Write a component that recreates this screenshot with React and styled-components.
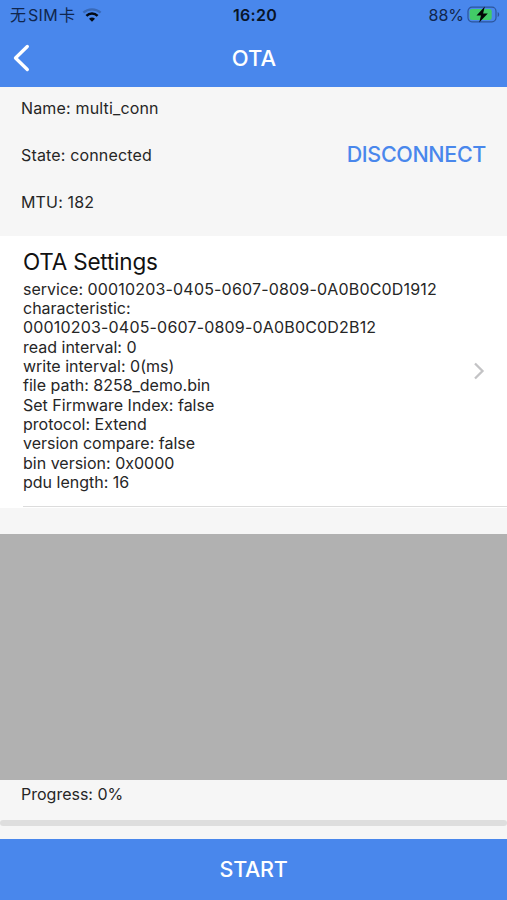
import React from 'react';
import styled, { createGlobalStyle } from 'styled-components';

const blue = '#4987ec';
const grey = '#f6f6f6';

const GlobalStyle = createGlobalStyle`
  body {
    margin: 0;
    background-color: ${grey};
    font-family: Inter, "Noto Sans CJK SC", sans-serif;
  }
`;

const Screen = styled.div`
  display: flex;
  flex-direction: column;
  width: 507px;
  height: 900px;
  overflow: hidden;
  color: #262626;
  background-color: ${grey};
`;

const Header = styled.header`
  height: 87px;
  flex: none;
  background-color: ${blue};
`;

const StatusBar = styled.div`
  display: grid;
  grid-template-columns: 1fr auto 1fr;
  align-items: center;
  height: 30px;
  padding: 0 7px 0 10px;
  color: #10264d;
  font-size: 16px;
`;

const Carrier = styled.div`
  display: flex;
  align-items: center;
  line-height: 20px;
  svg {
    margin-left: 7px;
  }
`;

const Sim = styled.span`
  margin: 0 1px 0 2px;
  letter-spacing: 0.3px;
`;

const Clock = styled.div`
  color: #081427;
  font-weight: 600;
  letter-spacing: 0.3px;
`;

const Power = styled.div`
  display: flex;
  align-items: center;
  justify-content: flex-end;
  svg {
    margin-left: 3px;
  }
`;

const NavBar = styled.div`
  display: grid;
  grid-template-columns: 1fr auto 1fr;
  align-items: center;
  height: 56px;
  padding-left: 12px;
  svg {
    display: block;
  }
`;

const NavTitle = styled.h1`
  margin: 0;
  padding-right: 11px;
  color: #fff;
  font-size: 22px;
  font-weight: 550;
`;

const Device = styled.section`
  display: flex;
  justify-content: space-between;
  align-items: center;
  height: 149px;
  flex: none;
  box-sizing: border-box;
  padding: 0 21px 13px;
`;

const DeviceInfo = styled.div`
  display: grid;
  gap: 27px;
  font-size: 16px;
  line-height: 20px;
  letter-spacing: 0.16px;
`;

const TextButton = styled.button`
  margin: 0;
  padding: 0 0 2px;
  border: none;
  background: none;
  color: ${blue};
  font-family: inherit;
  font-size: 21.5px;
  font-weight: 550;
  letter-spacing: -0.35px;
`;

const Settings = styled.section`
  display: flex;
  flex-direction: column;
  height: 272px;
  flex: none;
  background-color: #fff;
`;

const SettingsRow = styled.div`
  display: flex;
  align-items: center;
  justify-content: space-between;
  flex: 1;
  margin-left: 23px;
  padding-right: 21px;
`;

const SettingsText = styled.div`
  padding-bottom: 2px;
`;

const SettingsTitle = styled.h2`
  margin: 0 0 5px;
  color: #111;
  font-size: 22.5px;
  font-weight: 400;
  line-height: 27px;
  letter-spacing: -0.2px;
`;

const Line = styled.div`
  font-size: 16px;
  line-height: 19.3px;
`;

const Uuid = styled.span`
  letter-spacing: 0.18px;
`;

const Separator = styled.div`
  height: 1px;
  margin: 0 0 1px 23px;
  background-color: #dcdcdc;
`;

const Log = styled.div`
  height: 246px;
  flex: none;
  margin-top: 26px;
  background-color: #b1b1b1;
`;

const Progress = styled.div`
  height: 59px;
  flex: none;
`;

const ProgressLabel = styled.div`
  padding: 4px 21px 16px;
  font-size: 16px;
  line-height: 20px;
`;

const Track = styled.div`
  height: 6px;
  border-radius: 3px;
  background-color: #dedede;
`;

const StartButton = styled.button`
  flex: 1;
  padding: 0 0 1px;
  border: none;
  background-color: ${blue};
  color: #fff;
  font-family: inherit;
  font-size: 21.5px;
  font-weight: 550;
  letter-spacing: -0.3px;
`;

const settings = [
  'read interval: 0',
  'write interval: 0(ms)',
  'file path: 8258_demo.bin',
  'Set Firmware Index: false',
  'protocol: Extend',
  'version compare: false',
  'bin version: 0x0000',
  'pdu length: 16',
];

function WifiIcon() {
  return (
    <svg width="20" height="14" viewBox="0 0 20 14" fill="none">
      <path d="M1.4 4.7C6.2 .2 13.8 .2 18.6 4.7" stroke="#3869b8" strokeWidth="2.3" />
      <path d="M4.4 7.8C7.5 4.8 12.5 4.8 15.6 7.8" stroke="#040a14" strokeWidth="2.5" />
      <path d="M7 10.7C8.7 9.1 11.3 9.1 13 10.7L10 13.8Z" fill="#040a14" />
    </svg>
  );
}

function BatteryIcon() {
  return (
    <svg width="33" height="18" viewBox="0 0 33 18">
      <rect x="1" y="1.2" width="28" height="14.6" rx="4" fill="none" stroke="#2c559b" strokeWidth="1.2" />
      <rect x="2.7" y="3" width="22" height="11" rx="2.3" fill="#42cb67" />
      <path d="M30.7 6C32.7 6.7 32.7 10.3 30.7 11Z" fill="#2c559b" />
      <path d="M17.8 .6L9.5 9.5H14L12.2 16.6L20.8 7.5H16.1Z" fill="#020805" />
    </svg>
  );
}

function App() {
  return (
    <>
      <GlobalStyle />
      <Screen>
        <Header>
          <StatusBar>
            <Carrier>
              无<Sim>SIM</Sim>卡
              <WifiIcon />
            </Carrier>
            <Clock>16:20</Clock>
            <Power>
              88%
              <BatteryIcon />
            </Power>
          </StatusBar>
          <NavBar>
            <svg width="18" height="28" viewBox="0 0 18 28" fill="none">
              <path d="M15.3 2.5L3.5 14L15.3 25.5" stroke="#fff" strokeWidth="3.3" strokeLinecap="round" strokeLinejoin="round" />
            </svg>
            <NavTitle>OTA</NavTitle>
          </NavBar>
        </Header>
        <Device>
          <DeviceInfo>
            <div>Name: multi_conn</div>
            <div>State: connected</div>
            <div>MTU: 182</div>
          </DeviceInfo>
          <TextButton>DISCONNECT</TextButton>
        </Device>
        <Settings>
          <SettingsRow>
            <SettingsText>
              <SettingsTitle>OTA Settings</SettingsTitle>
              <Line>service: <Uuid>00010203-0405-0607-0809-0A0B0C0D1912</Uuid></Line>
              <Line>characteristic:</Line>
              <Line><Uuid>00010203-0405-0607-0809-0A0B0C0D2B12</Uuid></Line>
              {settings.map(text => <Line key={text}>{text}</Line>)}
            </SettingsText>
            <svg width="14" height="18" viewBox="0 0 14 18" fill="none">
              <path d="M3 1.5L10.5 9L3 16.5" stroke="#c3c3c5" strokeWidth="2.3" />
            </svg>
          </SettingsRow>
          <Separator />
        </Settings>
        <Log />
        <Progress>
          <ProgressLabel>Progress: 0%</ProgressLabel>
          <Track />
        </Progress>
        <StartButton>START</StartButton>
      </Screen>
    </>
  );
}

export default App;
